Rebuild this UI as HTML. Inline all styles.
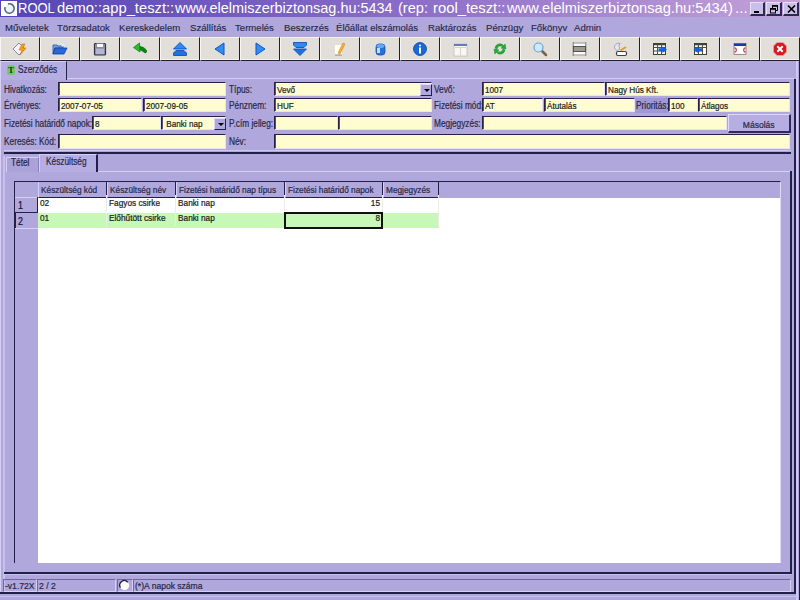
<!DOCTYPE html>
<html><head><meta charset="utf-8">
<style>
*{margin:0;padding:0;box-sizing:border-box}
html,body{width:800px;height:600px;overflow:hidden;background:#b0a8dc;font-family:"Liberation Sans",sans-serif;font-size:10px;color:#282848}
.a{position:absolute}
.s{display:inline-block;transform:scaleX(0.83);transform-origin:0 0;white-space:nowrap}
.s{-webkit-text-stroke:0.22px currentColor}
.lbl .s{font-size:10px;transform:scaleX(0.83)}
.cell .s,.hdr .s{font-size:9px;transform:scaleX(0.92)}
.rind .s{font-size:10.5px;transform:scaleX(0.85)}
.sp .s{font-size:9px;transform:scaleX(0.95)}
.fld .s{font-size:9.6px;transform:scaleX(0.85)}
#title{left:0;top:0;width:800px;height:17px;background:linear-gradient(90deg,#5444b4 0%,#8a6cc8 50%,#c4a2d8 100%)}
#title .t{left:18px;top:0px;font-size:14.6px;color:#fff;white-space:nowrap;line-height:17px}
.menu{top:18px;height:20px;line-height:20px;white-space:nowrap;color:#282848;font-size:9.6px;-webkit-text-stroke:0.15px currentColor}
.tb{top:37px;width:40px;height:24px;background:#e2deda;border-top:1px solid #f4f2f0;border-left:1px solid #f8f6f4;border-right:1px solid #202030;border-bottom:1px solid #202030;box-shadow:inset 0 -1px 0 #f4f2f0}
.fld{background:#fffcd0;border-top:1px solid #282048;border-left:1px solid #282048;box-shadow:inset 1px 0 0 #585078;border-bottom:1px solid #e8e4f8;border-right:1px solid #e8e4f8;white-space:nowrap;padding-left:2px;line-height:13px;color:#202020}
.lbl{white-space:nowrap;color:#282848;line-height:12px}
.tbtn{top:2px;width:16px;height:14px;background:#c8c0e8;border-top:1px solid #e8e0f8;border-left:1px solid #e8e0f8;border-right:2px solid #302850;border-bottom:2px solid #302850}
.cbtn{width:12px;height:12px;background:#b0a8dc;border-top:1px solid #e0d8f8;border-left:1px solid #e0d8f8;border-right:1px solid #202048;border-bottom:1px solid #202048}
.cbtn:after{content:"";position:absolute;left:3px;top:4px;border-left:3px solid transparent;border-right:3px solid transparent;border-top:3px solid #000}
.hdr{background:#b0a8dc;border-left:1px solid #d8d0f4;border-right:1px solid #202048;border-bottom:1px solid #202048;line-height:16px;padding-left:2px;white-space:nowrap;overflow:hidden;color:#282848}
.rind{background:#b0a8dc;border-top:1px solid #d8d0f4;line-height:16px;padding-left:3px;color:#101030}
.cell{line-height:16px;padding-left:2px;white-space:nowrap;overflow:hidden;border-right:1px solid #ececec;color:#202020}
.sp{border-top:1px solid #706898;border-left:1px solid #706898;border-bottom:1px solid #d8d0f4;border-right:1px solid #d8d0f4;line-height:11px;padding-left:1px;white-space:nowrap;overflow:hidden;color:#282848}
</style></head><body>
<div id="title" class="a">
<div class="a" style="left:1px;top:1px;width:16px;height:15px;background:#fff"></div>
<svg class="a" style="left:2px;top:2px" width="14" height="13" viewBox="0 0 14 13"><circle cx="7.5" cy="6.5" r="4.2" fill="#e8f4fa"/><path d="M5.97 2.06 A4.7 4.7 0 1 1 3.03 5.05" fill="none" stroke="#586878" stroke-width="1.6"/></svg>
<div class="a t" style="left:17.75px;transform:scaleX(0.89);transform-origin:0 0">ROOL</div>
<div class="a t" style="left:56.70px;transform:scaleX(1.01);transform-origin:0 0">demo::app_teszt::</div>
<div class="a t" style="left:174.70px;transform:scaleX(0.99);transform-origin:0 0">www.elelmiszerbiztonsag.hu:5434</div>
<div class="a t" style="left:398.00px;transform:scaleX(1.0);transform-origin:0 0">(rep:</div>
<div class="a t" style="left:432.50px;transform:scaleX(1.015);transform-origin:0 0">rool_teszt::</div>
<div class="a t" style="left:506.70px;transform:scaleX(1.005);transform-origin:0 0">www.elelmiszerbiztonsag.hu:5434)</div>
<div class="a t" style="left:735.00px;transform:scaleX(1.05);transform-origin:0 0">...</div>
</div>
<div class="a menu" style="left:5px">Műveletek</div>
<div class="a menu" style="left:57px">Törzsadatok</div>
<div class="a menu" style="left:119px">Kereskedelem</div>
<div class="a menu" style="left:190px">Szállítás</div>
<div class="a menu" style="left:235px">Termelés</div>
<div class="a menu" style="left:284px">Beszerzés</div>
<div class="a menu" style="left:336px">Élőállat elszámolás</div>
<div class="a menu" style="left:428px">Raktározás</div>
<div class="a menu" style="left:486px">Pénzügy</div>
<div class="a menu" style="left:531px">Főkönyv</div>
<div class="a menu" style="left:574px">Admin</div>
<div class="a tb" style="left:0px"></div><svg class="a" style="left:12px;top:41px" width="16" height="16" viewBox="0 0 16 16"><path d="M7 2 L13 8 L7 14 L1 8 Z" fill="#f4f4fa" stroke="#8088b0" stroke-width="1"/><path d="M10 3 L13 3 L11 7 L14 7 L8 14 L10 9 L7 9 Z" fill="#f0a020" stroke="#d07010" stroke-width="0.6"/></svg>
<div class="a tb" style="left:40px"></div><svg class="a" style="left:52px;top:41px" width="16" height="16" viewBox="0 0 16 16"><path d="M1 4 L5 4 L6 5 L11 5 L11 7 L3 7 L1 13 Z" fill="#70a8e8" stroke="#2050a0" stroke-width="0.8"/><path d="M3 7 L15 7 L12 13 L1 13 Z" fill="#2868d8" stroke="#1040a0" stroke-width="0.8"/><path d="M9 2 L13 4 L10 6" fill="#e0f0ff"/></svg>
<div class="a tb" style="left:80px"></div><svg class="a" style="left:92px;top:41px" width="16" height="16" viewBox="0 0 16 16"><rect x="2.5" y="2.5" width="11" height="11.5" rx="1" fill="#9898b8" stroke="#303048" stroke-width="1.2"/><rect x="4.5" y="2.5" width="7" height="4" fill="#fafafa" stroke="#606078" stroke-width="0.6"/><rect x="4" y="8" width="8" height="5" fill="#c8c8e0" opacity="0.6"/></svg>
<div class="a tb" style="left:120px"></div><svg class="a" style="left:132px;top:41px" width="16" height="16" viewBox="0 0 16 16"><path d="M6 8 C8 8 11 9 13 11 C13.5 11.5 14 10.5 14 10 C12 7 9 6 6.5 6" fill="none" stroke="#108018" stroke-width="2.2" stroke-linecap="round"/><path d="M1.5 6.5 L7.5 2 L8 11 Z" fill="#28c028" stroke="#108018" stroke-width="0.8" stroke-linejoin="round"/></svg>
<div class="a tb" style="left:160px"></div><svg class="a" style="left:172px;top:41px" width="16" height="16" viewBox="0 0 16 16"><path d="M8 1.5 L14.5 8 L1.5 8 Z" fill="#3088f0" stroke="#1050c0" stroke-width="0.9" stroke-linejoin="round"/><path d="M1.5 12 L4 9.5 L12 9.5 L14.5 12 L14.5 14.5 L1.5 14.5 Z" fill="#2070e0" stroke="#1050c0" stroke-width="0.9" stroke-linejoin="round"/></svg>
<div class="a tb" style="left:200px"></div><svg class="a" style="left:212px;top:41px" width="16" height="16" viewBox="0 0 16 16"><path d="M3 8 L12 2 L12 14 Z" fill="#3090f0" stroke="#1050c0" stroke-width="1" stroke-linejoin="round"/></svg>
<div class="a tb" style="left:240px"></div><svg class="a" style="left:252px;top:41px" width="16" height="16" viewBox="0 0 16 16"><path d="M13 8 L4 2 L4 14 Z" fill="#3090f0" stroke="#1050c0" stroke-width="1" stroke-linejoin="round"/></svg>
<div class="a tb" style="left:280px"></div><svg class="a" style="left:292px;top:41px" width="16" height="16" viewBox="0 0 16 16"><path d="M1.5 1.5 L14.5 1.5 L14.5 4 L12 6.5 L4 6.5 L1.5 4 Z" fill="#3088f0" stroke="#1050c0" stroke-width="0.9" stroke-linejoin="round"/><path d="M8 14.5 L14.5 8 L1.5 8 Z" fill="#2070e0" stroke="#1050c0" stroke-width="0.9" stroke-linejoin="round"/></svg>
<div class="a tb" style="left:320px"></div><svg class="a" style="left:332px;top:41px" width="16" height="16" viewBox="0 0 16 16"><rect x="3" y="4" width="7" height="10" fill="#fffff0"/><path d="M6 12 L11 2 L13 3 L8 13 Z" fill="#f0b030" stroke="#e08020" stroke-width="0.6"/><path d="M3 14 L10 14" stroke="#707070" stroke-width="0.8"/></svg>
<div class="a tb" style="left:360px"></div><svg class="a" style="left:372px;top:41px" width="16" height="16" viewBox="0 0 16 16"><rect x="4" y="3" width="9" height="11" rx="3" fill="#2870e0" stroke="#2050a0" stroke-width="0.8"/><ellipse cx="8.5" cy="5" rx="4" ry="2" fill="#60a8f8"/><rect x="5" y="7" width="3" height="5" fill="#c0e0ff"/></svg>
<div class="a tb" style="left:400px"></div><svg class="a" style="left:412px;top:41px" width="16" height="16" viewBox="0 0 16 16"><circle cx="8" cy="8" r="6.5" fill="#1868d8" stroke="#0848a8" stroke-width="0.8"/><circle cx="8" cy="4.5" r="1" fill="#fff"/><rect x="7" y="6.5" width="2" height="6" fill="#fff"/></svg>
<div class="a tb" style="left:440px"></div><svg class="a" style="left:452px;top:41px" width="16" height="16" viewBox="0 0 16 16"><rect x="2" y="3" width="13" height="12" fill="#f8f8f0" stroke="#b0b0b0" stroke-width="0.6"/><rect x="2" y="3" width="13" height="2" fill="#6878c0"/><path d="M8.5 7 L8.5 14 M3 6.5 L14 6.5" stroke="#c8c8c8" stroke-width="0.8"/></svg>
<div class="a tb" style="left:480px"></div><svg class="a" style="left:492px;top:41px" width="16" height="16" viewBox="0 0 16 16"><path d="M3 7 A5 5 0 0 1 12 5 L13 3 L14 8 L9 7 L11 6 A3.5 3.5 0 0 0 5 8 Z" fill="#20b030" stroke="#108020" stroke-width="0.5"/><path d="M13 9 A5 5 0 0 1 4 11 L3 13 L2 8 L7 9 L5 10 A3.5 3.5 0 0 0 11 8 Z" fill="#20b030" stroke="#108020" stroke-width="0.5"/></svg>
<div class="a tb" style="left:520px"></div><svg class="a" style="left:532px;top:41px" width="16" height="16" viewBox="0 0 16 16"><path d="M9 9 L14 14" stroke="#806040" stroke-width="2.5" stroke-linecap="round"/><circle cx="6.5" cy="6.5" r="4.5" fill="#c8ecff" stroke="#70a0c8" stroke-width="1.2"/></svg>
<div class="a tb" style="left:560px"></div><svg class="a" style="left:572px;top:41px" width="16" height="16" viewBox="0 0 16 16"><rect x="1.5" y="1.5" width="12" height="13" fill="#fafafa"/><path d="M1.2 1 V15 M13.8 1 V15" stroke="#787878" stroke-width="1"/><path d="M1 2 H14 M1 14 H14" stroke="#909090" stroke-width="1"/><rect x="1.5" y="5.5" width="12" height="5" fill="#9a9e90" stroke="#505050" stroke-width="1"/></svg>
<div class="a tb" style="left:600px"></div><svg class="a" style="left:612px;top:41px" width="16" height="16" viewBox="0 0 16 16"><rect x="4.5" y="10.5" width="10" height="4" rx="1.5" fill="#fff" stroke="#404040" stroke-width="1.2"/><path d="M2.5 7.5 C2 4 5 1.5 8 2.5 L6.5 5 C8.5 6.5 7.5 9.5 5 9.5 Z" fill="#e8e8f4" stroke="#9090a8" stroke-width="0.8"/><path d="M8.5 9.5 L14 6" stroke="#e0a030" stroke-width="2"/></svg>
<div class="a tb" style="left:640px"></div><svg class="a" style="left:652px;top:41px" width="16" height="16" viewBox="0 0 16 16"><rect x="1.5" y="2.5" width="12" height="11" fill="#fbfbf6" stroke="#404030" stroke-width="1"/><path d="M1.5 3.5 H13.5" stroke="#404030" stroke-width="1.5"/><path d="M1.5 6.5 H13.5 M1.5 10 H13.5 M5.5 2.5 V13.5 M9.5 2.5 V13.5" stroke="#505040" stroke-width="1"/><path d="M6.5 7.3 L10.5 7.3 L10.5 5.3 L15 8.6 L10.5 12 L10.5 10 L6.5 10 Z" fill="#1060f0"/></svg>
<div class="a tb" style="left:680px"></div><svg class="a" style="left:692px;top:41px" width="16" height="16" viewBox="0 0 16 16"><rect x="2.5" y="2.5" width="12" height="11" fill="#fbfbf6" stroke="#404030" stroke-width="1"/><path d="M2.5 3.5 H14.5" stroke="#404030" stroke-width="1.5"/><path d="M2.5 6.5 H14.5 M2.5 10 H14.5 M6.5 2.5 V13.5 M10.5 2.5 V13.5" stroke="#505040" stroke-width="1"/><rect x="11.2" y="7.2" width="2.6" height="5.6" fill="#fff"/><path d="M10 7.3 L6 7.3 L6 5.3 L1.5 8.6 L6 12 L6 10 L10 10 Z" fill="#1060f0"/></svg>
<div class="a tb" style="left:720px"></div><svg class="a" style="left:732px;top:41px" width="16" height="16" viewBox="0 0 16 16"><rect x="2" y="2.5" width="12" height="11" fill="#fff4f4" stroke="#907070" stroke-width="0.8"/><rect x="2" y="2.5" width="12" height="2.5" fill="#1838b0"/><path d="M2.5 6.5 L5 9 L2.5 11.5 M13.5 6.5 L11 9 L13.5 11.5" stroke="#c05060" stroke-width="1.4" fill="none"/><rect x="5" y="6" width="6" height="6" fill="#fff"/></svg>
<div class="a tb" style="left:760px"></div><svg class="a" style="left:772px;top:41px" width="16" height="16" viewBox="0 0 16 16"><path d="M5 1.5 L11 1.5 L14.5 5 L14.5 11 L11 14.5 L5 14.5 L1.5 11 L1.5 5 Z" fill="#d81820" stroke="#f0a0a0" stroke-width="0.8"/><path d="M5.3 5.3 L10.7 10.7 M10.7 5.3 L5.3 10.7" stroke="#fff" stroke-width="2"/></svg>
<div class="a tbtn" style="left:750px;width:15px"><div class="a" style="left:3px;top:8px;width:5px;height:2px;background:#000"></div></div>
<div class="a tbtn" style="left:766px;width:16px"><svg class="a" style="left:2px;top:1px" width="10" height="10" viewBox="0 0 10 10"><path d="M3.5 4 V1.5 H8.5 V6.5 H6" fill="none" stroke="#000" stroke-width="1"/><rect x="3" y="1" width="6" height="1.8" fill="#000"/><rect x="1.5" y="4.5" width="5" height="4.5" fill="none" stroke="#000" stroke-width="1"/><rect x="1" y="4" width="6" height="1.8" fill="#000"/></svg></div>
<div class="a tbtn" style="left:783px;width:16px"><svg class="a" style="left:3px;top:2px" width="9" height="8" viewBox="0 0 9 8"><path d="M1 0.5 L8 7.5 M8 0.5 L1 7.5" stroke="#000" stroke-width="1.6"/></svg></div>
<div class="a" style="left:0px;top:61px;width:67px;height:19px;background:#b6aee2;border-top:1px solid #d8d0f4;border-left:1px solid #d8d0f4;border-right:1px solid #202048"></div>
<div class="a" style="left:7px;top:65px;width:8px;height:10px;background:#78c868;border-radius:2px"></div>
<div class="a" style="left:7px;top:64px;width:8px;height:11px;font:bold 9px 'Liberation Serif',serif;color:#104010;text-align:center;line-height:12px">T</div>
<div class="a lbl" style="left:18px;top:64px"><span class="s">Szerződés</span></div>
<div class="a" style="left:67px;top:78px;width:727px;height:1px;background:#d8d0f4"></div>
<div class="a" style="left:0px;top:61px;width:1px;height:533px;background:#d8d0f4"></div>
<div class="a" style="left:794px;top:79px;width:2px;height:515px;background:#202048"></div>
<div class="a" style="left:796px;top:61px;width:2px;height:539px;background:#d0c8f0"></div>
<div class="a" style="left:0px;top:592px;width:796px;height:2px;background:#202048"></div>
<div class="a" style="left:0px;top:596px;width:800px;height:1px;background:#c8c0ec"></div>
<div class="a" style="left:799px;top:61px;width:1px;height:539px;background:#201848"></div>
<div class="a lbl" style="left:4px;top:84px"><span class="s">Hivatkozás:</span></div>
<div class="a fld" style="left:58px;top:82px;width:168px;height:14px"></div>
<div class="a lbl" style="left:229px;top:84px"><span class="s">Típus:</span></div>
<div class="a fld" style="left:274px;top:82px;width:158px;height:14px"><span class="s">Vevő</span></div>
<div class="a cbtn" style="left:420px;top:84px"></div>
<div class="a lbl" style="left:434px;top:84px"><span class="s">Vevő:</span></div>
<div class="a fld" style="left:482px;top:82px;width:123px;height:14px"><span class="s">1007</span></div>
<div class="a fld" style="left:605px;top:82px;width:185px;height:14px"><span class="s">Nagy Hús Kft.</span></div>
<div class="a lbl" style="left:4px;top:100px"><span class="s">Érvényes:</span></div>
<div class="a fld" style="left:58px;top:98px;width:84px;height:14px"><span class="s">2007-07-05</span></div>
<div class="a fld" style="left:143px;top:98px;width:83px;height:14px"><span class="s">2007-09-05</span></div>
<div class="a lbl" style="left:229px;top:100px"><span class="s">Pénznem:</span></div>
<div class="a fld" style="left:274px;top:98px;width:158px;height:14px"><span class="s">HUF</span></div>
<div class="a lbl" style="left:434px;top:100px"><span class="s">Fizetési mód:</span></div>
<div class="a fld" style="left:482px;top:98px;width:61px;height:14px"><span class="s">AT</span></div>
<div class="a fld" style="left:544px;top:98px;width:91px;height:14px"><span class="s">Átutalás</span></div>
<div class="a" style="left:635px;top:98px;width:33px;height:15px;background:#a098d4"></div>
<div class="a lbl" style="left:636px;top:100px"><span class="s">Prioritás:</span></div>
<div class="a fld" style="left:668px;top:98px;width:30px;height:14px"><span class="s">100</span></div>
<div class="a fld" style="left:698px;top:98px;width:92px;height:14px"><span class="s">Átlagos</span></div>
<div class="a lbl" style="left:4px;top:118px"><span class="s">Fizetési határidő napok:</span></div>
<div class="a fld" style="left:92px;top:116px;width:69px;height:14px"><span class="s">8</span></div>
<div class="a fld" style="left:161px;top:116px;width:65px;height:14px"><span class="s">&nbsp;Banki nap</span></div>
<div class="a cbtn" style="left:214px;top:118px"></div>
<div class="a lbl" style="left:229px;top:118px"><span class="s">P.cím jelleg:</span></div>
<div class="a fld" style="left:274px;top:116px;width:64px;height:14px"></div>
<div class="a fld" style="left:338px;top:116px;width:94px;height:14px"></div>
<div class="a lbl" style="left:434px;top:118px"><span class="s">Megjegyzés:</span></div>
<div class="a fld" style="left:482px;top:116px;width:245px;height:14px"></div>
<div class="a" style="left:728px;top:114px;width:63px;height:19px;background:#b6aee2;border-top:1px solid #e0d8f8;border-left:1px solid #e0d8f8;border-right:2px solid #302860;border-bottom:2px solid #302860;text-align:center;line-height:19px;color:#282848"><span class="s" style="transform-origin:50% 0;font-size:9.5px;transform:scaleX(0.9)">Másolás</span></div>
<div class="a lbl" style="left:4px;top:136px"><span class="s">Keresés: Kód:</span></div>
<div class="a fld" style="left:58px;top:134px;width:168px;height:15px"></div>
<div class="a lbl" style="left:229px;top:136px"><span class="s">Név:</span></div>
<div class="a fld" style="left:274px;top:134px;width:516px;height:15px"></div>
<div class="a" style="left:4px;top:150px;width:787px;height:1px;background:#d0c8f0"></div>
<div class="a" style="left:4px;top:152px;width:787px;height:2px;background:#202048"></div>
<div class="a" style="left:6px;top:157px;width:33px;height:15px;background:#aaa2d8;border-top:1px solid #d8d0f4;border-left:1px solid #d8d0f4;border-right:1px solid #8880b8"></div>
<div class="a lbl" style="left:11px;top:157px"><span class="s">Tétel</span></div>
<div class="a" style="left:39px;top:154px;width:59px;height:18px;background:#b6aee2;border-top:1px solid #d8d0f4;border-left:1px solid #d8d0f4;border-right:2px solid #202048"></div>
<div class="a lbl" style="left:46px;top:156px"><span class="s">Készültség</span></div>
<div class="a" style="left:98px;top:171px;width:693px;height:1px;background:#d8d0f4"></div>
<div class="a" style="left:3px;top:156px;width:2px;height:436px;background:#c8c0ec"></div>
<div class="a" style="left:790px;top:171px;width:2px;height:402px;background:#202048"></div>
<div class="a" style="left:4px;top:572px;width:788px;height:2px;background:#202048"></div>
<div class="a" style="left:14px;top:181px;width:767px;height:382px;background:#ffffff;border-top:1px solid #202048;border-left:1px solid #202048;border-right:1px solid #e0dcf8"></div>
<div class="a" style="left:15px;top:182px;width:765px;height:16px;background:#b0a8dc"></div>
<div class="a" style="left:15px;top:182px;width:23px;height:381px;background:#b0a8dc"></div>
<div class="a hdr" style="left:38px;top:182px;width:69px;height:16px"><span class="s">Készültség kód</span></div>
<div class="a hdr" style="left:107px;top:182px;width:69px;height:16px"><span class="s">Készültség név</span></div>
<div class="a hdr" style="left:176px;top:182px;width:109px;height:16px"><span class="s">Fizetési határidő nap típus</span></div>
<div class="a hdr" style="left:285px;top:182px;width:98px;height:16px"><span class="s">Fizetési határidő napok</span></div>
<div class="a hdr" style="left:383px;top:182px;width:56px;height:16px"><span class="s">Megjegyzés</span></div>
<div class="a" style="left:38px;top:213px;width:401px;height:15px;background:#c8f8b8"></div>
<div class="a rind" style="left:15px;top:197px;width:23px;height:15px;line-height:14px;padding-left:3px"><span class="s">1</span></div>
<div class="a rind" style="left:15px;top:213px;width:23px;height:15px;border-top:none;border-left:1px solid #202048;padding-left:2px;line-height:16px"><span class="s">2</span></div>
<div class="a rind" style="left:15px;top:228px;width:23px;height:16px"></div>
<div class="a" style="left:37px;top:197px;width:1px;height:16px;background:#202048"></div>
<div class="a" style="left:15px;top:212px;width:23px;height:1px;background:#202048"></div>
<div class="a cell" style="left:38px;top:195px;width:69px;height:16px;"><span class="s">02</span></div>
<div class="a cell" style="left:107px;top:195px;width:69px;height:16px;"><span class="s">Fagyos csirke</span></div>
<div class="a cell" style="left:176px;top:195px;width:109px;height:16px;"><span class="s">Banki nap</span></div>
<div class="a cell" style="left:285px;top:195px;width:98px;height:16px;text-align:right;padding-right:2px;"><span class="s" style="transform-origin:100% 0">15</span></div>
<div class="a cell" style="left:383px;top:195px;width:56px;height:16px;"></div>
<div class="a cell" style="left:38px;top:210px;width:69px;height:16px;"><span class="s">01</span></div>
<div class="a cell" style="left:107px;top:210px;width:69px;height:16px;"><span class="s">Előhűtött csirke</span></div>
<div class="a cell" style="left:176px;top:210px;width:109px;height:16px;"><span class="s">Banki nap</span></div>
<div class="a cell" style="left:285px;top:210px;width:98px;height:16px;text-align:right;padding-right:2px;"><span class="s" style="transform-origin:100% 0">8</span></div>
<div class="a cell" style="left:383px;top:210px;width:56px;height:16px;"></div>
<div class="a" style="left:284px;top:212px;width:99px;height:17px;border:2px solid #101010"></div>
<div class="a" style="left:4px;top:574px;width:787px;height:1px;background:#c8c0ec"></div>
<div class="a sp" style="left:3px;top:579px;width:34px;height:13px"><span class="s">-v1.72X</span></div>
<div class="a sp" style="left:37px;top:579px;width:79px;height:13px"><span class="s">2 / 2</span></div>
<div class="a sp" style="left:117px;top:579px;width:16px;height:13px"></div>
<svg class="a" style="left:118px;top:579px" width="13" height="13" viewBox="0 0 13 13"><circle cx="6.5" cy="6.5" r="4.6" fill="#fff"/><path d="M2.4 8.6 A4.6 4.6 0 0 1 9.8 3.2" fill="none" stroke="#202040" stroke-width="1.3"/></svg>
<div class="a sp" style="left:133px;top:579px;width:658px;height:13px"><span class="s">(*)A napok száma</span></div>
</body></html>
